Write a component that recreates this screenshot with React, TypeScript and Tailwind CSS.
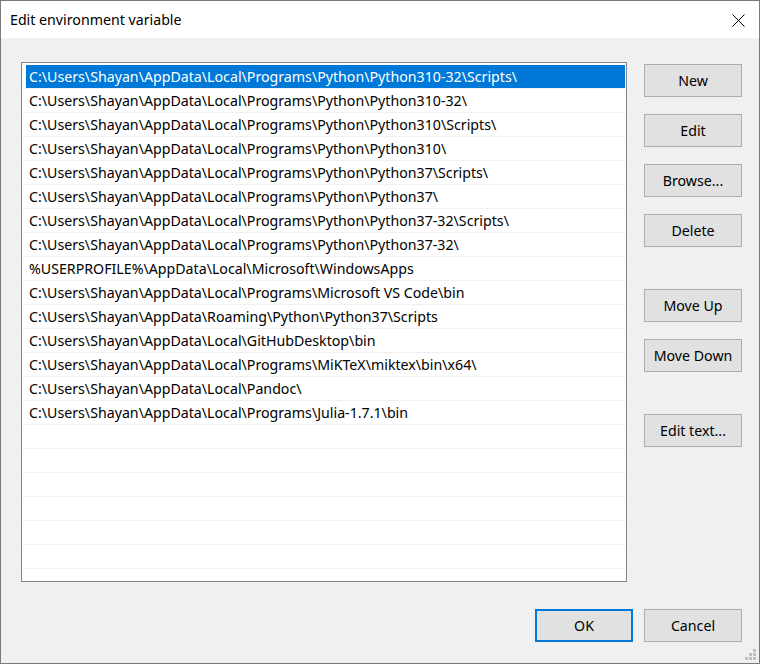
import React from 'react';

const paths = [
  'C:\\Users\\Shayan\\AppData\\Local\\Programs\\Python\\Python310-32\\Scripts\\',
  'C:\\Users\\Shayan\\AppData\\Local\\Programs\\Python\\Python310-32\\',
  'C:\\Users\\Shayan\\AppData\\Local\\Programs\\Python\\Python310\\Scripts\\',
  'C:\\Users\\Shayan\\AppData\\Local\\Programs\\Python\\Python310\\',
  'C:\\Users\\Shayan\\AppData\\Local\\Programs\\Python\\Python37\\Scripts\\',
  'C:\\Users\\Shayan\\AppData\\Local\\Programs\\Python\\Python37\\',
  'C:\\Users\\Shayan\\AppData\\Local\\Programs\\Python\\Python37-32\\Scripts\\',
  'C:\\Users\\Shayan\\AppData\\Local\\Programs\\Python\\Python37-32\\',
  '%USERPROFILE%\\AppData\\Local\\Microsoft\\WindowsApps',
  'C:\\Users\\Shayan\\AppData\\Local\\Programs\\Microsoft VS Code\\bin',
  'C:\\Users\\Shayan\\AppData\\Roaming\\Python\\Python37\\Scripts',
  'C:\\Users\\Shayan\\AppData\\Local\\GitHubDesktop\\bin',
  'C:\\Users\\Shayan\\AppData\\Local\\Programs\\MiKTeX\\miktex\\bin\\x64\\',
  'C:\\Users\\Shayan\\AppData\\Local\\Pandoc\\',
  'C:\\Users\\Shayan\\AppData\\Local\\Programs\\Julia-1.7.1\\bin',
];

// empty rows fill the rest of the list box
const rows = [...paths, '', '', '', '', '', '', ''];

function WinButton({ label, primary, className = '' }: { label: string; primary?: boolean; className?: string }) {
  return (
    <button
      className={
        'w-[98px] h-[33px] bg-[#e1e1e1] text-[14.2px] text-black flex items-center justify-center ' +
        (primary ? 'border-2 border-[#0078d7] ' : 'border border-[#adadad] ') +
        className
      }
    >
      {label}
    </button>
  );
}

export default function App() {
  return (
    <div
      className="relative w-[760px] h-[664px] bg-[#f0f0f0] border border-[#7a7a7a] flex flex-col text-black"
      style={{ fontFamily: '"Noto Sans", "Open Sans", sans-serif' }}
    >
      {/* title bar */}
      <div className="h-[37px] bg-white flex items-center justify-between pl-[9px] pr-[14px]">
        <span className="text-[14.2px] pt-[1px]">Edit environment variable</span>
        <svg width="13" height="13" viewBox="0 0 13 13" className="mt-[1px]">
          <path d="M0.5 0.5 L12.5 12.5 M12.5 0.5 L0.5 12.5" stroke="#000" strokeWidth="1" fill="none" />
        </svg>
      </div>

      <div className="flex pl-[20px] pt-[24px]">
        {/* list */}
        <div className="w-[606px] h-[520px] bg-white border border-[#828790] overflow-hidden pt-[2px]">
          {rows.map((p, i) => (
            <div key={i} className="h-[24px] border-b border-[#f0f0f0]">
              <div
                className={
                  'h-[23px] ml-[4px] mr-[1px] pl-[3px] pt-[1px] flex items-center text-[14.2px] whitespace-nowrap ' +
                  (i === 0 ? 'bg-[#0078d7] text-white' : '')
                }
              >
                {p}
              </div>
            </div>
          ))}
        </div>

        {/* side buttons */}
        <div className="flex flex-col ml-[17px] pt-[2px]">
          <WinButton label="New" />
          <WinButton label="Edit" className="mt-[17px]" />
          <WinButton label="Browse..." className="mt-[17px]" />
          <WinButton label="Delete" className="mt-[17px]" />
          <WinButton label="Move Up" className="mt-[42px]" />
          <WinButton label="Move Down" className="mt-[17px]" />
          <WinButton label="Edit text..." className="mt-[42px]" />
        </div>
      </div>

      {/* bottom buttons */}
      <div className="flex justify-end gap-[11px] pr-[17px] mt-[27px]">
        <WinButton label="OK" primary />
        <WinButton label="Cancel" />
      </div>

      {/* resize grip */}
      <svg width="11" height="11" viewBox="0 0 11 11" className="absolute right-[3px] bottom-[3px]">
        <g fill="#bfbfbf">
          <rect x="8" y="0" width="3" height="3" />
          <rect x="4" y="4" width="3" height="3" />
          <rect x="8" y="4" width="3" height="3" />
          <rect x="0" y="8" width="3" height="3" />
          <rect x="4" y="8" width="3" height="3" />
          <rect x="8" y="8" width="3" height="3" />
        </g>
      </svg>
    </div>
  );
}
